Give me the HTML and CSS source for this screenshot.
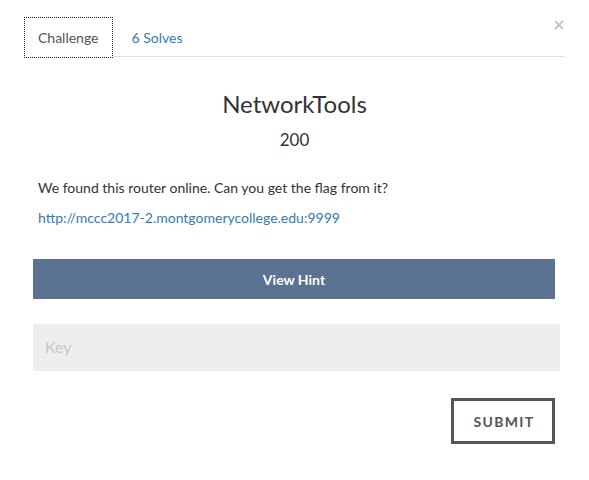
FILE: index.html
```html
<!DOCTYPE html>
<html lang="en">
<head>
<meta charset="utf-8">
<title>NetworkTools</title>
<link rel="stylesheet" href="styles.css">
</head>
<body>
<div class="modal">
  <button class="close" aria-label="Close">
    <svg width="10" height="10" viewBox="0 0 10 10"><path d="M1 1 L9 9 M9 1 L1 9" stroke="#c6c6c6" stroke-width="2" fill="none"/></svg>
  </button>
  <nav class="tabs">
    <a class="tab active">Challenge</a>
    <a class="tab link">6 Solves</a>
  </nav>
  <h2 class="title">NetworkTools</h2>
  <h3 class="value">200</h3>
  <div class="content">
    <p class="desc">We found this router online. Can you get the flag from it?</p>
    <p class="desc url"><a href="#">http://mccc2017-2.montgomerycollege.edu:9999</a></p>
    <button class="hint">View Hint</button>
    <input class="key" type="text" placeholder="Key">
    <div class="actions">
      <button class="submit">SUBMIT</button>
    </div>
  </div>
</div>
</body>
</html>
```
FILE: styles.css
```css
* { box-sizing: border-box; }
body {
  margin: 0;
  background: #fff;
  font-family: Lato, "Open Sans", sans-serif;
  color: #333;
}
.modal {
  position: relative;
  padding: 17px 24px 36px;
}
.close {
  position: absolute;
  top: 20px;
  right: 25px;
  border: 0;
  background: none;
  padding: 0;
  width: 10px;
  height: 10px;
  line-height: 0;
}
.tabs {
  display: flex;
  height: 40px;
  border-bottom: 1px solid #ddd;
}
.tab {
  display: block;
  height: 41px;
  margin-bottom: -1px;
  padding: 0 13px;
  font-size: 14px;
  line-height: 39px;
  border: 1px solid transparent;
  text-decoration: none;
}
.tab.active {
  border: 1px dotted #222;
  background: #fff;
  color: #555;
}
.tab.link {
  margin-left: 5px;
  color: #337ab7;
}
.title {
  margin: 32px 0 0;
  font-size: 24px;
  line-height: 29px;
  font-weight: 400;
  text-align: center;
  color: #333;
}
.value {
  margin: 12px 0 0;
  font-size: 17px;
  line-height: 20px;
  font-weight: 400;
  text-align: center;
  color: #333;
}
.content {
  margin: 0 5px 0 9px;
  display: flex;
  flex-direction: column;
}
.desc {
  margin: 28px 0 0;
  padding-left: 5px;
  font-size: 14px;
  line-height: 20px;
  color: #333;
}
.desc.url {
  margin-top: 10px;
}
.desc a {
  color: #337ab7;
  text-decoration: none;
}
.hint {
  margin: 31px 5px 0 0;
  height: 40px;
  border: 0;
  background: #5b7290;
  color: #fff;
  font-family: Lato, sans-serif;
  font-weight: 700;
  font-size: 14px;
}
.key {
  margin-top: 25px;
  height: 47px;
  border: 0;
  background: #eee;
  padding: 0 12px 3px;
  font-family: Lato, sans-serif;
  font-size: 16px;
  color: #333;
  outline: none;
}
.key::placeholder {
  color: #c8c8c8;
}
.actions {
  display: flex;
  justify-content: flex-end;
  margin: 27px 5px 0 0;
}
.submit {
  width: 104px;
  height: 46px;
  border: 3px solid #555;
  background: #fff;
  color: #555;
  font-family: Lato, sans-serif;
  font-weight: 700;
  font-size: 14px;
  letter-spacing: 1.3px;
  padding: 0 0 0 2px;
}
```
